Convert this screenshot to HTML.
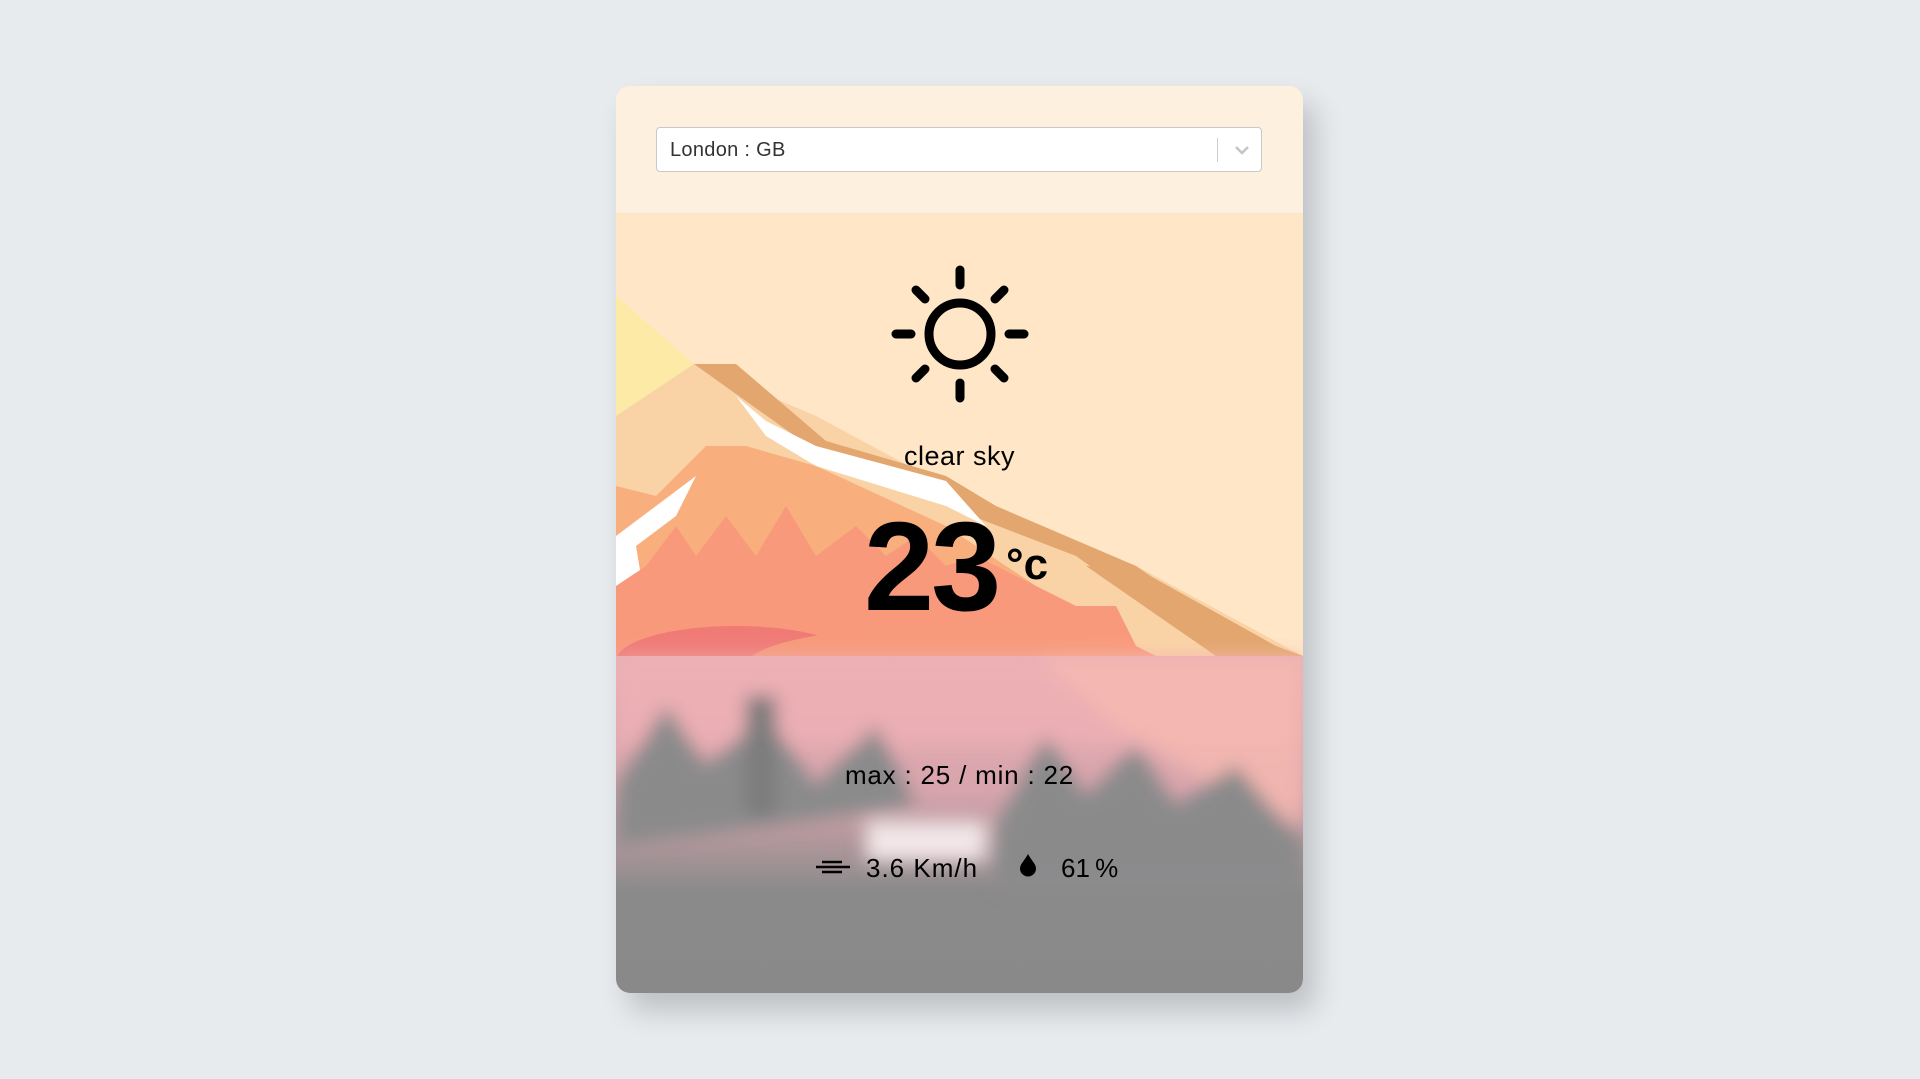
<!DOCTYPE html>
<html><head><meta charset="utf-8"><style>
html,body{margin:0;padding:0;width:1920px;height:1079px;background:#e7ebee;overflow:hidden;font-family:"Liberation Sans",sans-serif}
.card{position:absolute;left:616px;top:86px;width:687px;height:907px;border-radius:14px;overflow:hidden;box-shadow:12px 18px 28px rgba(0,0,0,0.18);background:#fef0df}
.sel{position:absolute;left:40px;top:41px;width:606px;height:45px;background:#fff;border:1px solid #c8c8c8;border-radius:4px;box-sizing:border-box}
.sel span{position:absolute;left:13px;top:11px;font-size:20px;color:#333;letter-spacing:0.3px}
.sel .div{position:absolute;left:560px;top:10px;width:1px;height:24px;background:#ccc}
.t{position:absolute;color:#000;white-space:nowrap}
</style></head><body>
<div class="card">
<svg width="687" height="907" style="position:absolute;left:0;top:0">
<defs>
<filter id="b" x="-10%" y="-10%" width="120%" height="120%"><feGaussianBlur stdDeviation="9"/></filter>
<linearGradient id="g" x1="0" y1="0" x2="0" y2="1">
<stop offset="0" stop-color="#e8b0b4"/><stop offset="0.4" stop-color="#d8a4ac"/><stop offset="0.7" stop-color="#8a8a8b"/><stop offset="1" stop-color="#89898a"/></linearGradient>
</defs>
<rect x="0" y="127" width="687" height="1" fill="#f6e4cc"/>
<rect x="0" y="128" width="687" height="442" fill="#fee6c6"/>
<polygon points="0,210 78,278 0,340" fill="#fdeaa6"/>
<polygon points="0,330 78,278 200,330 330,400 520,480 687,570 0,570" fill="#f9d3a6"/>
<polygon points="78,278 120,278 210,355 330,390 380,420 520,480 650,570 600,570 460,470 330,420 200,365" fill="#e2a66e"/>
<polygon points="470,480 520,482 660,560 687,570 600,570" fill="#e2a66e"/>
<polygon points="120,310 150,335 200,360 330,395 370,440 330,420 200,380 150,350" fill="#fff"/>
<polygon points="0,400 40,410 90,360 130,360 200,380 330,440 420,500 460,570 0,570" fill="#f8ae7d"/>
<polygon points="0,450 40,420 80,390 60,430 20,460 30,520 0,540" fill="#fff"/>
<polygon points="0,500 30,480 60,440 80,470 110,430 140,470 170,420 200,470 240,440 270,470 300,450 330,480 360,470 420,500 460,520 500,520 520,560 540,570 0,570" fill="#f8997c"/>
<ellipse cx="120" cy="575" rx="120" ry="35" fill="#f07b76"/>
<ellipse cx="330" cy="580" rx="200" ry="40" fill="#f79a7a"/>
<rect x="0" y="570" width="687" height="337" fill="url(#g)"/>
<g filter="url(#b)">
<rect x="0" y="570" width="687" height="90" fill="#f0b1b5" opacity="0.7"/>
<polygon points="420,570 687,570 687,740 600,700 500,640" fill="#f6b9b0" opacity="0.8"/>
<polygon points="0,700 50,620 90,680 150,630 200,700 260,640 300,720 0,760" fill="#8a8a8b"/>
<polygon points="380,740 430,650 470,710 520,660 560,720 620,680 687,760 687,800 380,800" fill="#8a8a8b"/>
<rect x="250" y="735" width="120" height="40" fill="#f2e6e8"/>
<rect x="130" y="610" width="30" height="120" fill="#7c7c7d"/>
</g>
</svg>
<div class="sel"><span>London : GB</span><div class="div"></div>
<svg style="position:absolute;left:577px;top:16px" width="16" height="12"><path d="M2 3 L8 9 L14 3" stroke="#c4c4c4" stroke-width="2.5" fill="none"/></svg></div>
<svg style="position:absolute;left:272px;top:176px" width="144" height="144" viewBox="-72 -72 144 144">
<circle r="31" fill="none" stroke="#000" stroke-width="9"/>
<g stroke="#000" stroke-width="9" stroke-linecap="round">
<line x1="0" y1="-49" x2="0" y2="-64"/><line x1="0" y1="49" x2="0" y2="64"/>
<line x1="-49" y1="0" x2="-64" y2="0"/><line x1="49" y1="0" x2="64" y2="0"/>
<line x1="35" y1="-35" x2="44" y2="-44"/><line x1="-35" y1="-35" x2="-44" y2="-44"/>
<line x1="35" y1="35" x2="44" y2="44"/><line x1="-35" y1="35" x2="-44" y2="44"/>
</g></svg>
<div class="t" style="left:0;width:687px;text-align:center;top:355px;font-size:27px;letter-spacing:0.5px">clear sky</div>
<div class="t" style="left:248px;top:408px;font-size:126px;font-weight:bold;letter-spacing:-3px">23</div>
<div class="t" style="left:390px;top:454px;font-size:44px;font-weight:bold">°c</div>
<div class="t" style="left:0;width:687px;text-align:center;top:674px;font-size:26px;letter-spacing:0.8px">max : 25 / min : 22</div>
<svg style="position:absolute;left:200px;top:773px" width="36" height="16"><g stroke="#000" stroke-width="2.5"><line x1="6" y1="3" x2="26" y2="3"/><line x1="0" y1="8" x2="34" y2="8"/><line x1="6" y1="13" x2="26" y2="13"/></g></svg>
<div class="t" style="left:250px;top:767px;font-size:26px;letter-spacing:1px">3.6 Km/h</div>
<svg style="position:absolute;left:402px;top:767px" width="20" height="24"><path d="M10 1 C13 7 18 11 18 15.5 A8 8 0 0 1 2 15.5 C2 11 7 7 10 1Z" fill="#000"/></svg>
<div class="t" style="left:445px;top:767px;font-size:26px">61&#8201;%</div>
</div>
</body></html>
